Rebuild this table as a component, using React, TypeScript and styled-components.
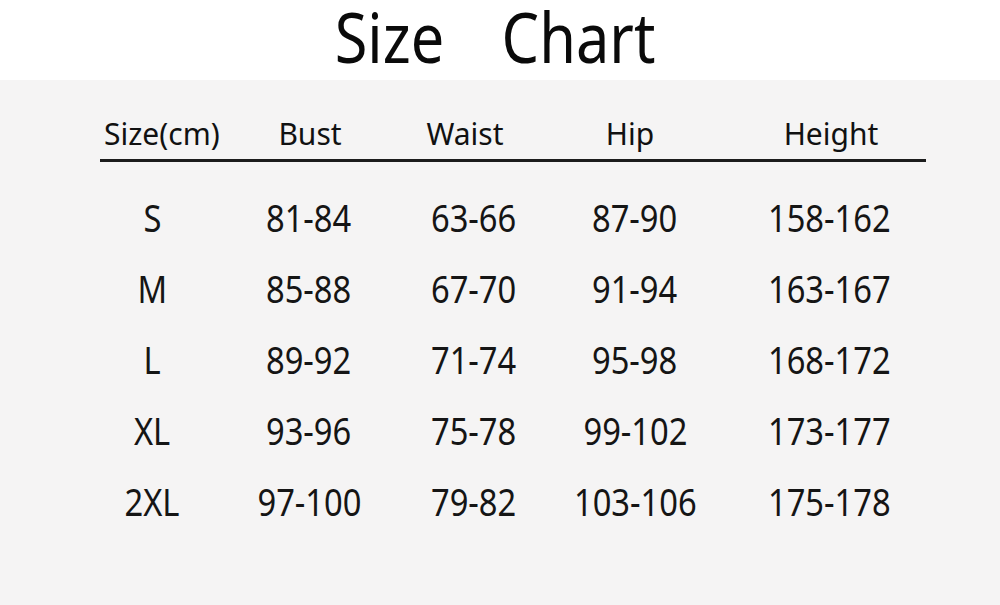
import React from "react";
import styled, { createGlobalStyle } from "styled-components";

const Global = createGlobalStyle`
  html, body { margin: 0; padding: 0; background: #ffffff; }
  body { font-family: "Noto Sans", "Open Sans", Arial, sans-serif; color: #111; }
  #root { width: 1000px; height: 605px; overflow: hidden; }
`;

const Page = styled.div`
  width: 1000px;
  height: 605px;
  display: flex;
  flex-direction: column;
`;

const TitleBar = styled.header`
  height: 80px;
  background: #ffffff;
  display: flex;
  justify-content: center;
  align-items: flex-start;
  gap: 35px;
  padding-right: 6px;
  box-sizing: border-box;
`;

const TitleWord = styled.span`
  display: inline-block;
  font-size: 70px;
  line-height: 72px;
  color: #0a0a0a;
  transform: scaleX(0.85);
  transform-origin: center;
`;

const Panel = styled.main`
  flex: 1;
  background: #f5f4f4;
  padding: 34px 74px 0 100px;
  box-sizing: border-box;
`;

const Grid = styled.div`
  display: grid;
  grid-template-columns: 110px 200px 120px 206px 190px;
  width: 826px;
`;

const HeadRow = styled.div`
  display: contents;
`;

const HeadCell = styled.div<{ $shift?: number }>`
  font-size: 30px;
  line-height: 40px;
  height: 40px;
  padding-bottom: 5px;
  margin-bottom: 20px;
  border-bottom: 3px solid #1c1c1c;
  text-align: center;
  color: #111;
  span {
    display: inline-block;
    transform: translateX(${(p) => p.$shift ?? 0}px);
  }
`;

const Cell = styled.div<{ $shift?: number }>`
  font-size: 38px;
  line-height: 71px;
  height: 71px;
  text-align: center;
  color: #151515;
  span {
    display: inline-block;
    transform: translateX(${(p) => p.$shift ?? 0}px) scaleX(0.86);
    transform-origin: center;
  }
`;

const headers: { label: string; shift: number }[] = [
  { label: "Size(cm)", shift: 4 },
  { label: "Bust", shift: 0 },
  { label: "Waist", shift: -5 },
  { label: "Hip", shift: -3 },
  { label: "Height", shift: 0 },
];

const valueShifts = [-3, -1, 4, 2, -2];

const rows: string[][] = [
  ["S", "81-84", "63-66", "87-90", "158-162"],
  ["M", "85-88", "67-70", "91-94", "163-167"],
  ["L", "89-92", "71-74", "95-98", "168-172"],
  ["XL", "93-96", "75-78", "99-102", "173-177"],
  ["2XL", "97-100", "79-82", "103-106", "175-178"],
];

export default function App() {
  return (
    <>
      <Global />
      <Page>
        <TitleBar>
          <TitleWord>Size</TitleWord>
          <TitleWord>Chart</TitleWord>
        </TitleBar>
        <Panel>
          <Grid>
            <HeadRow>
              {headers.map((h) => (
                <HeadCell key={h.label} $shift={h.shift}>
                  <span>{h.label}</span>
                </HeadCell>
              ))}
            </HeadRow>
            {rows.map((r) =>
              r.map((v, i) => (
                <Cell key={r[0] + i} $shift={valueShifts[i]}>
                  <span>{v}</span>
                </Cell>
              ))
            )}
          </Grid>
        </Panel>
      </Page>
    </>
  );
}
